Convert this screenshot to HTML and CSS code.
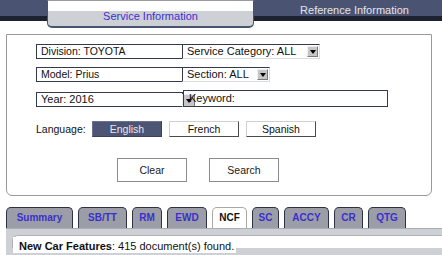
FILE: index.html
```html
<!DOCTYPE html>
<html>
<head>
<meta charset="utf-8">
<link rel="stylesheet" href="styles.css">
</head>
<body>
<div class="topbar">
  <div class="topbar-left"></div>
  <div class="toptab">Service Information</div>
  <div class="topbar-ref">Reference Information</div>
</div>

<div class="panel">
  <div class="row">
    <div class="field field-main">Division: TOYOTA</div>
    <div class="select select-cat">Service Category: ALL<span class="arrow"></span></div>
  </div>
  <div class="row">
    <div class="field field-main">Model: Prius</div>
    <div class="select select-sec">Section: ALL<span class="arrow"></span></div>
  </div>
  <div class="row row-year">
    <div class="select select-year">Year: 2016<span class="arrow arrow-over"></span></div>
    <div class="field field-key">Keyword:</div>
  </div>
  <div class="row row-lang">
    <span class="lang-label">Language:</span>
    <div class="lang lang-on">English</div>
    <div class="lang">French</div>
    <div class="lang">Spanish</div>
  </div>
  <div class="row row-btns">
    <div class="btn">Clear</div>
    <div class="btn">Search</div>
  </div>
</div>

<div class="tabs">
  <div class="tab t-summary">Summary</div>
  <div class="tab t-sbtt">SB/TT</div>
  <div class="tab t-rm">RM</div>
  <div class="tab t-ewd">EWD</div>
  <div class="tab tab-active t-ncf">NCF</div>
  <div class="tab t-sc">SC</div>
  <div class="tab t-accy">ACCY</div>
  <div class="tab t-cr">CR</div>
  <div class="tab t-qtg">QTG</div>
</div>
<div class="results">
  <div class="results-box">
    <span class="result-text"><b>New Car Features</b>: 415 document(s) found.</span>
  </div>
</div>
</body>
</html>
```

FILE: styles.css
```css
* { box-sizing: border-box; }
html, body { margin: 0; padding: 0; background: #fff; }
body {
  width: 442px;
  height: 255px;
  overflow: hidden;
  font-family: "Liberation Sans", Arial, sans-serif;
  color: #111;
}

/* top bar */
.topbar {
  display: flex;
  align-items: flex-start;
  height: 28px;
}
.topbar-left {
  width: 47px;
  height: 21px;
  background: linear-gradient(#4b5373 0, #4b5373 16px, #1d2230 16px, #1d2230 21px);
}
.toptab {
  width: 207px;
  height: 28px;
  background: linear-gradient(#fff 0, #fff 10px, #cdd0d5 10px);
  border-top: 1px solid #9a9a9a;
  border-left: 1px solid #4b5373;
  border-right: 1px solid #4b5373;
  border-bottom: 2px solid #4b5373;
  border-radius: 0 0 5px 5px;
  text-align: center;
  font-size: 11px;
  line-height: 13px;
  padding-top: 9px;
  color: #3d31cf;
}
.topbar-ref {
  flex: 1;
  height: 21px;
  background: linear-gradient(#4b5373 0, #4b5373 16px, #1d2230 16px, #1d2230 21px);
  color: #e2e4ea;
  font-size: 11px;
  line-height: 13px;
  padding: 4px 0 0 13px;
  text-align: center;
}

/* search panel */
.panel {
  margin: 6px 0 0 6px;
  width: 426px;
  height: 162px;
  border: 1px solid #9a9a9a;
  border-radius: 0 0 6px 6px;
  padding: 9px 0 0 29px;
}
.row {
  display: flex;
  align-items: flex-start;
  margin-bottom: 8px;
}
.field {
  height: 15px;
  border: 1px solid #333a4e;
  font-size: 10.5px;
  line-height: 13px;
  padding-left: 4px;
  white-space: nowrap;
}
.field-main { width: 147px; }
.select {
  position: relative;
  display: flex;
  justify-content: space-between;
  height: 15px;
  margin-left: -1px;
  border: 1px solid;
  border-color: #333a4e #dcdcdc #dcdcdc #333a4e;
  font-size: 11px;
  line-height: 13px;
  padding: 0 1px 0 4px;
  white-space: nowrap;
}
.select-cat { width: 138px; }
.select-sec { width: 88px; }
.arrow {
  width: 11px;
  height: 11px;
  margin-top: 1px;
  background: #c6c6c6;
  border: 1px solid;
  border-color: #f0f0f0 #7a7a7a #7a7a7a #f0f0f0;
  display: flex;
  align-items: center;
  justify-content: center;
}
.arrow::after {
  content: "";
  border-left: 3px solid transparent;
  border-right: 3px solid transparent;
  border-top: 4px solid #000;
}

.row-year {
  align-items: flex-end;
  height: 17px;
  margin-bottom: 14px;
}
.select-year {
  width: 147px;
  margin-left: 0;
  border: 1px solid #333a4e;
  z-index: 1;
}
.arrow-over {
  position: absolute;
  left: 145px;
  top: 0;
  width: 13px;
  height: 13px;
}
.field-key {
  position: relative;
  z-index: 2;
  width: 205px;
  height: 17px;
  line-height: 15px;
  font-size: 11px;
  padding-left: 5px;
}

.row-lang {
  align-items: center;
  height: 16px;
  margin-bottom: 21px;
  font-size: 10.5px;
}
.lang-label { width: 56px; }
.lang {
  width: 70px;
  height: 16px;
  margin-right: 7px;
  border: 1px solid;
  border-color: #d0d0d0 #4a4a4a #4a4a4a #d0d0d0;
  text-align: center;
  line-height: 14px;
}
.lang-on {
  background: #4d5575;
  color: #e6e8ee;
  border-color: #6a7290 #3a4060 #3a4060 #6a7290;
}

.row-btns { padding-left: 81px; }
.btn {
  width: 70px;
  height: 24px;
  margin-right: 22px;
  border: 1px solid #8c8c8c;
  font-size: 10.5px;
  line-height: 22px;
  text-align: center;
  color: #1a1a1a;
}

/* result tabs */
.tabs {
  display: flex;
  gap: 5px;
  margin-top: 11px;
  padding-left: 6px;
  height: 21px;
}
.tab {
  height: 21px;
  background: #9b9ea6;
  border: 1px solid #2c3244;
  border-bottom: none;
  border-radius: 5px 5px 0 0;
  font-size: 10px;
  font-weight: bold;
  color: #3b2fd0;
  text-align: center;
  line-height: 19px;
}
.tab-active {
  background: #fff;
  border-color: #a8a8a8;
  color: #111;
}
.t-summary { width: 67px; }
.t-sbtt { width: 49px; }
.t-rm { width: 30px; }
.t-ewd { width: 40px; }
.t-ncf { width: 35px; }
.t-sc { width: 27px; }
.t-accy { width: 45px; }
.t-cr { width: 29px; }
.t-qtg { width: 38px; }

.results {
  margin-left: 6px;
  height: 27px;
  background: #cdd0d5;
  border-top: 1px solid #a9acb2;
  padding: 6px 0 0 6px;
}
.results-box {
  height: 13px;
  background: #fff;
  border-top: 1px solid #b0b0b0;
  border-left: 1px solid #b0b0b0;
  border-top-left-radius: 6px;
}
.result-text {
  display: inline-block;
  background: #fff;
  font-size: 11px;
  line-height: 13px;
  padding: 3px 2px 0 6px;
  white-space: nowrap;
}
```
